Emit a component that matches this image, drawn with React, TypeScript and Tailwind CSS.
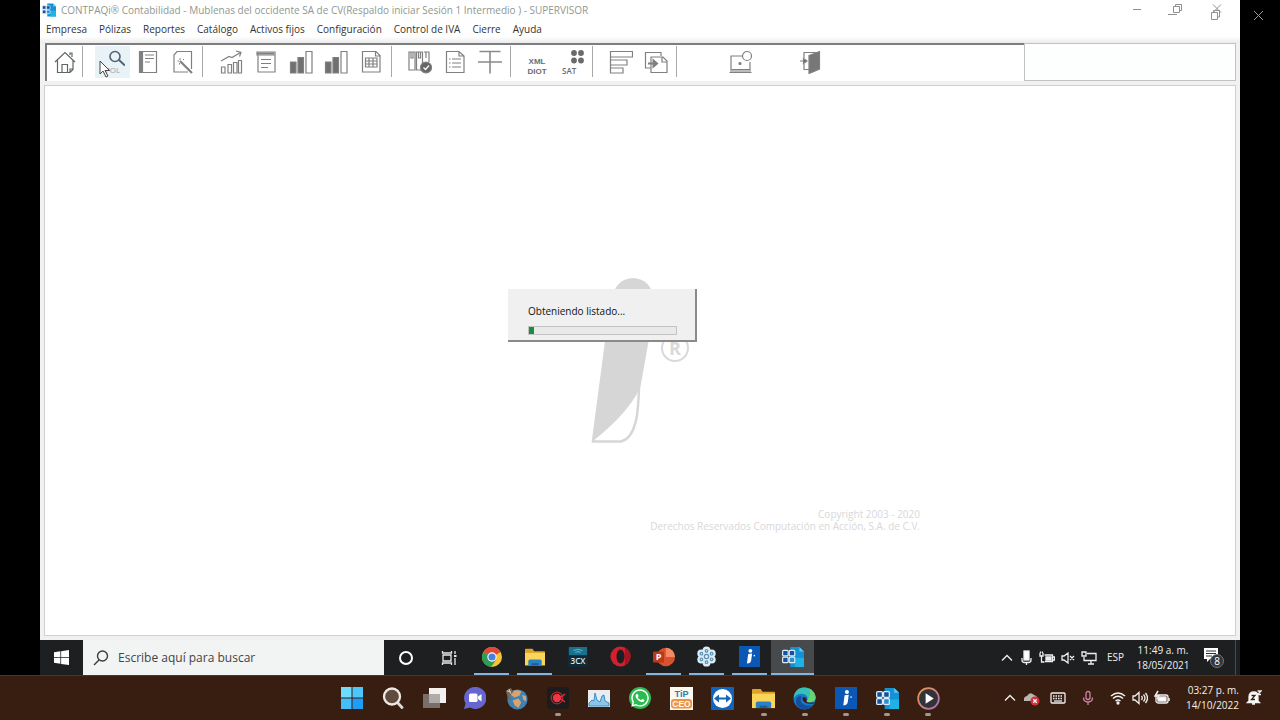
import type { ReactNode } from "react";
import { FaWhatsapp } from "react-icons/fa";

const menus = [
  "Empresa",
  "Pólizas",
  "Reportes",
  "Catálogo",
  "Activos fijos",
  "Configuración",
  "Control de IVA",
  "Cierre",
  "Ayuda",
];

/* ---------- toolbar drawings ---------- */

function Line({ children, color = "#808080" }: { children: ReactNode; color?: string }) {
  return (
    <svg viewBox="0 0 24 24" width="24" height="24" fill="none" stroke={color} strokeWidth="1.200">
      {children}
    </svg>
  );
}

const HomeIcon = () => (
  <Line color="#5f6668">
    <path d="M2 12 12 2.500 22 12M4.500 10.500V22.500H17L20 19.500V10.500M17 5V3h2v4M9 22.500V14.500h5.500v8M17 22v-3h3" />
  </Line>
);
const LookupIcon = () => (
  <svg viewBox="0 0 24 24" width="24" height="24" fill="none" stroke="#4f6274" strokeWidth="1.600">
    <circle cx="14" cy="6.500" r="5" />
    <path d="m18 10 6 5.500" strokeWidth="2" />
    <text x="4" y="23" fontSize="8" fill="#9aa2a6" stroke="none" fontFamily="Open Sans, sans-serif">
      POL
    </text>
  </svg>
);
const BookIcon = () => (
  <Line>
    <path d="M3.500 1.500h17v21h-17zM6.500 1.500v21" />
    <path d="M5 2v20" strokeWidth="2.200" />
    <path d="M9 5h9M9 8.500h9M9 12h5" strokeWidth="1" />
  </Line>
);
const WandIcon = () => (
  <Line>
    <path d="M20.500 19V1.500H6L3 5v17h14" />
    <path d="m9 11 12 12" strokeWidth="2.200" />
    <path d="M9 8v2M6.500 11H8M13 9l-1 1M8.500 14.500V13" strokeWidth="1" />
  </Line>
);
const TrendIcon = () => (
  <Line>
    <path d="M2.500 17h3.500v6H2.500zM9 14.500h3.500V23H9zM14.500 12.500H18V23h-3.500zM19.500 10.500H22.500V23h-3z" />
    <path d="m2 11 8-4.500 3 1 8.500-5M17 1l5 1.500-1.500 4" />
  </Line>
);
const LedgerIcon = () => (
  <Line>
    <path d="M4 5v17h17V5M3 2h18v3H3zM7 9.500h10M7 13.500h10M7 17.500h7" />
    <path d="M3 3.500h17" strokeWidth="2" />
  </Line>
);
const BarsIcon = () => (
  <Line>
    <path d="M1.500 12H7v11H1.500zM9 7.500h5.500V23H9z" fill="#707070" />
    <path d="M17 1.500h6V23h-6z" />
  </Line>
);
const SheetIcon = () => (
  <Line>
    <path d="M3.500 1.500H17L21 5.500v16.500H3.500zM16.500 1.500V6H21" />
    <path d="M6.500 8h11.500v9H6.500zM6.500 11h11.500M6.500 14h11.500M10 8v9M14 8v9" />
  </Line>
);
const BindersIcon = () => (
  <Line>
    <path d="M1 2h6v18H1zM8.500 2h6v18h-6zM16 2h5v10M3 2v6h2V2M10.500 2v6h2V2M18 2v6" />
    <circle cx="18" cy="17.500" r="5.500" fill="#666" />
    <path d="m15.500 17.500 2 2 3.500-4" stroke="#fff" />
  </Line>
);
const NoteIcon = () => (
  <Line>
    <path d="M3.500 1.500H16L21 6v16.500H3.500zM16 1.500V6h5M9 9h9M9 13h9M9 17h9M6 9h1.500M6 13h1.500M6 17h1.500" />
  </Line>
);
const AccountIcon = () => (
  <Line color="#8a8a8a">
    <path d="M1.500 1.500h21M0 12h24M12 1.500v22" strokeWidth="1.600" />
  </Line>
);
const XmlIcon = () => (
  <svg viewBox="0 0 24 24" width="24" height="24" fill="#6d6d6d" fontFamily="Liberation Sans, sans-serif" fontWeight="700">
    <text x="12" y="14" fontSize="8" textAnchor="middle">XML</text>
    <text x="12" y="23.500" fontSize="8" textAnchor="middle">DIOT</text>
  </svg>
);
const SatIcon = () => (
  <svg viewBox="0 0 24 24" width="24" height="24" fill="#6a6a6a">
    <circle cx="14" cy="3" r="2.900" />
    <circle cx="21" cy="3" r="2.900" />
    <circle cx="14" cy="10.500" r="2.900" />
    <circle cx="21" cy="10.500" r="2.900" />
    <text x="2" y="23.500" fontSize="8" fontFamily="Open Sans, sans-serif" fontWeight="600">SAT</text>
  </svg>
);
const RowsIcon = () => (
  <Line>
    <path d="M1.500 1.500h22v5.500h-22zM1.500 10h16.500v5H1.500zM1.500 18H14v5H1.500zM1.500 1v22" />
  </Line>
);
const CopyIcon = () => (
  <Line>
    <path d="M17 6V2.500H1.500V18H7M7 7h12l4 4v11.500H7zM18 7v5h5" />
    <path d="M4 13.500h7M9.500 10.500l3.500 3-3.500 3z" strokeWidth="2" fill="#666" />
  </Line>
);
const LaptopIcon = () => (
  <Line>
    <path d="M14 6H3v13.500h19V12M1.500 22.500h22" />
    <path d="M2 21h21" stroke="#bbb" strokeWidth="2" />
    <circle cx="19" cy="6" r="4.500" />
    <circle cx="12" cy="13.500" r="1" fill="#666" />
  </Line>
);
const ExitIcon = () => (
  <Line>
    <path d="M6 8V2.500h16M6 14v5.500h5" />
    <path d="M11 5.500 21.500 1.500V19L11 23.500z" fill="#777" />
    <path d="M2 11h4M5.500 8.500 9 11l-3.500 2.500z" fill="#666" />
  </Line>
);

function Tool({ label, children, hot = false }: { label: string; children: ReactNode; hot?: boolean }) {
  return (
    <button
      aria-label={label}
      className={`relative flex h-8 w-[35px] shrink-0 items-center justify-center ${hot ? "bg-[#e9f2f7]" : ""}`}
    >
      {children}
    </button>
  );
}

const Sep = () => <span className="h-[31px] w-px shrink-0 bg-[#a8a8a8]" />;

/* ---------- application marks ---------- */

const ContpaqMark = ({ size }: { size: number }) => (
  <svg viewBox="0 0 24 24" width={size} height={size}>
    <path d="M9 1h10l5 5v17H9z" fill="#1592d6" />
    <path d="M19 1v5h5z" fill="#5fc7f0" />
    <path d="M14 13h10v10H14z" fill="#1fb2e6" />
    <g stroke="#dceefa" strokeWidth="1.300">
      <rect x="0.700" y="4.700" width="6" height="6" rx="1" fill="#15519f" />
      <rect x="7.900" y="4.700" width="6" height="6" rx="1" fill="#15519f" />
      <rect x="0.700" y="12.200" width="6" height="6" rx="1" fill="#15519f" />
      <rect x="7.900" y="12.200" width="6" height="6" rx="1" fill="#2a8fd0" />
    </g>
  </svg>
);
const InfoMark = ({ size }: { size: number }) => (
  <svg viewBox="0 0 24 24" width={size} height={size}>
    <path d="M0 0h24v24H0z" fill="#0b57b4" />
    <circle cx="13" cy="5.500" r="2.200" fill="#fff" />
    <path d="M10.500 9 15 8.500l-1 7.500c-.5 3-2 4-5 4z" fill="#fff" />
    <circle cx="17.500" cy="11" r=".9" fill="#fff" />
  </svg>
);
const FolderMark = ({ size }: { size: number }) => (
  <svg viewBox="0 0 24 24" width={size} height={size}>
    <path d="M0 3q0-1 1-1h8l2 3h12q1 0 1 1v16H0z" fill="#dca326" />
    <path d="M0 7h24v15H0z" fill="#fbd55b" />
    <path d="M4 22v-5q0-2 2-2h12q2 0 2 2v5z" fill="#2781c4" />
    <path d="M8 22v-2.500h8V22z" fill="#185f9e" />
  </svg>
);
const ChromeMark = () => (
  <svg viewBox="0 0 24 24" width="20" height="20">
    <circle cx="12" cy="12" r="12" fill="#f5c633" />
    <path d="M12 12 1.600 6A12 12 0 0 1 22.400 6z" fill="#dc493b" />
    <path d="M1.600 6A12 12 0 0 0 11 24l6-9-5-3z" fill="#2f9c56" />
    <circle cx="12" cy="12" r="5.600" fill="#fff" />
    <circle cx="12" cy="12" r="4.300" fill="#4682e4" />
  </svg>
);
const ThreeCxMark = () => (
  <svg viewBox="0 0 22 22" width="20" height="20">
    <rect width="22" height="22" rx="2" fill="#102a38" />
    <path d="M1 0h20v9H1z" fill="#1c708b" />
    <path d="M6 4q5-3 10 0M8 6q3-2 6 0" stroke="#54c5df" fill="none" />
    <text x="11" y="19" fontSize="9" fontWeight="600" fill="#dfe7ea" textAnchor="middle" fontFamily="Open Sans, sans-serif">3CX</text>
  </svg>
);
const OperaMark = () => (
  <svg viewBox="0 0 24 24" width="21" height="21">
    <circle cx="12" cy="12" r="11.500" fill="#d61f2d" />
    <path d="M17 2q7 4 6.500 10T17 22z" fill="#a81222" />
    <ellipse cx="12" cy="12" rx="4.600" ry="8" fill="#1e1f22" />
  </svg>
);
const PowerPointMark = () => (
  <svg viewBox="0 0 24 24" width="22" height="22">
    <circle cx="14" cy="12" r="10" fill="#d7522f" />
    <path d="M14 2a10 10 0 0 1 10 10H14z" fill="#f28a68" />
    <rect y="6" width="12" height="12" rx="1" fill="#bd3719" />
    <text x="6" y="15.500" fontSize="10" fontWeight="700" fill="#fff" textAnchor="middle" fontFamily="Open Sans, sans-serif">P</text>
  </svg>
);
const FlowerMark = () => (
  <svg viewBox="0 0 24 24" width="21" height="21">
    <g fill="#dcecf5">
      <circle cx="12" cy="12" r="8" />
      <circle cx="12" cy="5" r="4.500" />
      <circle cx="12" cy="19" r="4.500" />
      <circle cx="6" cy="8.500" r="4.500" />
      <circle cx="18" cy="8.500" r="4.500" />
      <circle cx="6" cy="15.500" r="4.500" />
      <circle cx="18" cy="15.500" r="4.500" />
    </g>
    <g fill="none" stroke="#5b8fb3" strokeWidth="1.300">
      <circle cx="12" cy="12" r="2.500" />
      <circle cx="12" cy="5.500" r="1.500" />
      <circle cx="12" cy="18.500" r="1.500" />
      <circle cx="6.200" cy="8.800" r="1.500" />
      <circle cx="17.800" cy="8.800" r="1.500" />
      <circle cx="6.200" cy="15.200" r="1.500" />
      <circle cx="17.800" cy="15.200" r="1.500" />
    </g>
  </svg>
);

const guestApps: { label: string; icon: ReactNode; open?: boolean; active?: boolean }[] = [
  { label: "Chrome", icon: <ChromeMark />, open: true },
  { label: "Explorador", icon: <FolderMark size={20} />, open: true },
  { label: "3CX", icon: <ThreeCxMark /> },
  { label: "Opera", icon: <OperaMark /> },
  { label: "PowerPoint", icon: <PowerPointMark />, open: true },
  { label: "GoTo", icon: <FlowerMark />, open: true },
  { label: "CONTPAQi", icon: <InfoMark size={21} />, open: true },
  { label: "Contabilidad", icon: <ContpaqMark size={22} />, open: true, active: true },
];

const hostApps: { label: string; icon: ReactNode; open?: boolean }[] = [
  {
    label: "Inicio",
    icon: (
      <svg viewBox="0 0 22 22" width="22" height="22">
        <path d="M0 0h10.500v10.500H0z" fill="#6fdcff" />
        <path d="M11.500 0H22v10.500H11.500z" fill="#4cc6fc" />
        <path d="M0 11.500h10.500V22H0z" fill="#43bdfb" />
        <path d="M11.500 11.500H22V22H11.500z" fill="#1f9df5" />
      </svg>
    ),
  },
  {
    label: "Buscar",
    icon: (
      <svg viewBox="0 0 22 22" width="22" height="22">
        <path d="m15 15 5 5.500" stroke="#ded9d5" strokeWidth="2.800" strokeLinecap="round" />
        <circle cx="10" cy="9.500" r="8" fill="#604b3d" stroke="#eee9e5" strokeWidth="2.300" />
      </svg>
    ),
  },
  {
    label: "Vista de tareas",
    icon: (
      <svg viewBox="0 0 24 22" width="24" height="22">
        <path d="M7 1h17v15H7z" fill="#f3f1ef" />
        <path d="M1 7h17v14H1z" fill="#77706a" />
        <path d="M7 7h11v9H7z" fill="#b0aba7" />
      </svg>
    ),
  },
  {
    label: "Chat",
    icon: (
      <svg viewBox="0 0 22 22" width="22" height="22">
        <path d="M11 0a11 11 0 1 1-5 20.500L0 22l1.500-5.500A11 11 0 0 1 11 0z" fill="#6666cf" />
        <rect x="5" y="6.500" width="8.500" height="8.500" rx="1.500" fill="#fff" />
        <path d="m14 9.500 3.500-2.500v7.500L14 12z" fill="#fff" />
      </svg>
    ),
  },
  {
    label: "Navegador",
    icon: (
      <svg viewBox="0 0 24 24" width="23" height="23">
        <circle cx="13" cy="13" r="10.500" fill="#3f83b5" />
        <path d="M7 5q6-3 10 0l-2 4-5 2-4-3zM8 14l6-2 3 4-3 6-4-3zM18 8l4 2v5l-3-2z" fill="#dda16f" />
        <path d="m1 4 5-3 3 4-4 4 2 5-4-2z" fill="#74675c" />
        <path d="m2 4 4 1M4 2l2 5" stroke="#e3d2b8" />
      </svg>
    ),
  },
  {
    label: "Grabadora",
    open: true,
    icon: (
      <svg viewBox="0 0 22 22" width="22" height="22">
        <rect width="22" height="22" rx="4" fill="#1d1c1c" />
        <circle cx="10" cy="11" r="5.800" fill="none" stroke="#a92731" strokeWidth="1.300" />
        <circle cx="10" cy="11" r="4.200" fill="#f03640" />
        <path d="m14 10 4-3M14 12l4 3" stroke="#e62e3a" strokeWidth="1.400" />
      </svg>
    ),
  },
  {
    label: "Monitor",
    icon: (
      <svg viewBox="0 0 22 17" width="22" height="17">
        <path d="M0 0h22v17H0z" fill="#e7edf1" />
        <path d="M1 13 4 10l2 1 1-8 2 7 3 2 2-6 2-1 1 6 4 2v3H1z" fill="#8cc6e8" stroke="#3b90c4" />
      </svg>
    ),
  },
  {
    label: "WhatsApp",
    icon: (
      <span className="flex size-[22px] items-center justify-center rounded-full bg-[#2dbb52] text-white">
        <FaWhatsapp size={20} />
      </span>
    ),
  },
  {
    label: "TiP CEO",
    icon: (
      <svg viewBox="0 0 23 23" width="23" height="23" fontFamily="Liberation Sans, sans-serif" fontWeight="700">
        <path d="M0 0h23v23H0z" fill="#fbf8f2" />
        <text x="11.500" y="9.500" fontSize="9" fill="#287daf" textAnchor="middle">TiP</text>
        <rect x="1" y="12" width="21" height="9.500" rx="3" fill="#ec9440" />
        <text x="11.500" y="20" fontSize="8.500" fill="#fff8e8" textAnchor="middle">CEO</text>
      </svg>
    ),
  },
  {
    label: "TeamViewer",
    icon: (
      <svg viewBox="0 0 23 23" width="23" height="23">
        <rect width="23" height="23" rx="1" fill="#0f64bd" />
        <circle cx="11.500" cy="11.500" r="9.500" fill="#fff" />
        <path d="m3 11.500 5-4v3h7v-3l5 4-5 4v-3H8v3z" fill="#1265b8" />
      </svg>
    ),
  },
  { label: "Explorador de archivos", icon: <FolderMark size={23} />, open: true },
  {
    label: "Edge",
    open: true,
    icon: (
      <svg viewBox="0 0 24 24" width="23" height="23">
        <circle cx="12" cy="12" r="11.500" fill="#1878c9" />
        <path d="M1 9C3 2 8 0 13 .5c7 .5 11 6 10.500 11C23 16 17 17 14 15c3-4 0-8-5-8-4 0-7 2-8 5z" fill="#35c1b5" />
        <path d="M17 2c5 3 7 7 6.500 10-1 4-6 5-9.500 3 3-3 5-8 3-13z" fill="#69d470" />
        <path d="M9 10c-3 5 1 11 12 9-5 7-17 5-18-4 0-4 3-6 6-5z" fill="#124f9e" />
        <path d="M10 11c-1 4 4 8 12 6 2-2-5 1-8-2 1-2 0-5-4-4z" fill="#3b1d0f" />
      </svg>
    ),
  },
  { label: "CONTPAQi", icon: <InfoMark size={22} />, open: true },
  { label: "Contabilidad", icon: <ContpaqMark size={23} />, open: true },
  {
    label: "Reproductor",
    open: true,
    icon: (
      <svg viewBox="0 0 24 24" width="23" height="23">
        <defs>
          <linearGradient id="ring" x1="0" y1="0" x2="1" y2="1">
            <stop offset="0" stopColor="#f29a44" />
            <stop offset="1" stopColor="#a06fc9" />
          </linearGradient>
        </defs>
        <circle cx="12" cy="12" r="10.800" fill="#333238" stroke="url(#ring)" strokeWidth="1.800" />
        <path d="m9 6.500 8.500 5.500L9 17.500z" fill="#fff" />
      </svg>
    ),
  },
];

/* ---------- tray drawings ---------- */

function Tray({ children, w = 16, color = "#f0f0f0" }: { children: ReactNode; w?: number; color?: string }) {
  return (
    <svg viewBox={`0 0 ${w} 16`} width={w} height="16" fill="none" stroke={color} strokeWidth="1.300" className="shrink-0">
      {children}
    </svg>
  );
}

const Chevron = () => (
  <Tray w={12}>
    <path d="m1 10.500 5-5 5 5" />
  </Tray>
);

function TitleBar() {
  return (
    <header className="flex h-5 items-center pl-[2px]">
      <span className="flex w-[19px] shrink-0">
        <ContpaqMark size={14} />
      </span>
      <h1 className="min-w-0 flex-1 truncate text-[10px] leading-5 text-[#8f9890]">
        CONTPAQi® Contabilidad - Mublenas del occidente SA de CV(Respaldo iniciar Sesión 1 Intermedio ) - SUPERVISOR
      </h1>
      <div className="mr-[3px] flex h-5 text-[#8f8f8f]">
        <button aria-label="Minimizar" className="flex w-10 justify-center">
          <svg width="24" height="20" fill="none" stroke="currentColor">
            <path d="M8 9.500h8" />
          </svg>
        </button>
        <button aria-label="Restaurar" className="flex w-10 justify-center">
          <svg width="24" height="20" fill="none" stroke="currentColor">
            <path d="M8.500 6.500h6v6h-6zM10.500 6v-1.500h6v6H15M3 14.500h9" />
          </svg>
        </button>
        <button aria-label="Cerrar" className="flex w-10 justify-center">
          <svg width="24" height="20" fill="none" stroke="currentColor">
            <path d="m8 4.500 8 8M16 4.500l-8 8M6.500 12.500h6v7h-6zM8.500 12v-1.500h6V17H13" />
          </svg>
        </button>
      </div>
    </header>
  );
}

function Toolbar() {
  return (
    <div className="flex h-[38px] pl-[5px] pr-1">
      <div className="flex min-w-0 flex-1 items-start border-l-2 border-t-2 border-[#7d7d7d] bg-white pt-px">
        <Tool label="Inicio"><HomeIcon /></Tool>
        <Sep />
        <div className="ml-3 mr-[2px] flex">
          <Tool label="Pólizas" hot>
            <LookupIcon />
            <svg viewBox="0 0 12 18" width="12" height="18" className="absolute left-1 top-[14px]">
              <path d="M1 1v13l3-3 3 6 2-1-3-5.500h4.500z" fill="#fff" stroke="#444" />
            </svg>
          </Tool>
          <Tool label="Libro"><BookIcon /></Tool>
          <Tool label="Asistente"><WandIcon /></Tool>
        </div>
        <Sep />
        <div className="ml-[10px] mr-[3px] flex">
          <Tool label="Tendencia"><TrendIcon /></Tool>
          <Tool label="Auxiliares"><LedgerIcon /></Tool>
          <Tool label="Balance"><BarsIcon /></Tool>
          <Tool label="Resultados"><BarsIcon /></Tool>
          <Tool label="Hoja"><SheetIcon /></Tool>
        </div>
        <Sep />
        <div className="ml-[10px] mr-[3px] flex">
          <Tool label="Ejercicios"><BindersIcon /></Tool>
          <Tool label="Documento"><NoteIcon /></Tool>
          <Tool label="Cuentas"><AccountIcon /></Tool>
        </div>
        <Sep />
        <div className="ml-2 mr-[3px] flex">
          <Tool label="XML DIOT"><XmlIcon /></Tool>
          <Tool label="SAT"><SatIcon /></Tool>
        </div>
        <Sep />
        <div className="ml-[10px] mr-[3px] flex">
          <Tool label="Niveles"><RowsIcon /></Tool>
          <Tool label="Exportar"><CopyIcon /></Tool>
        </div>
        <Sep />
        <div className="ml-[45px] flex gap-[35px]">
          <Tool label="Equipo"><LaptopIcon /></Tool>
          <Tool label="Salir"><ExitIcon /></Tool>
        </div>
      </div>
      <div className="w-[212px] shrink-0 border border-[#c2c2c2] bg-[#fdfefe]" />
    </div>
  );
}

function Workspace() {
  return (
    <main className="m-1 flex flex-1 justify-center border border-[#cfcfcf] bg-white pt-[190px]">
      <section className="relative flex w-[560px] flex-col items-center">
        <svg viewBox="0 0 110 172" width="110" height="172">
          <circle cx="48" cy="22" r="20" fill="#d6d6d6" />
          <path d="M21 67H62L54 114Q42 138 8 165z" fill="#d6d6d6" />
          <path d="M21 67H62L54 112Q53 140 50 148 46 163 36 165.500H8z" fill="none" stroke="#d6d6d6" strokeWidth="2.500" />
          <circle cx="90" cy="72" r="13" fill="none" stroke="#d9d9d9" strokeWidth="2" />
          <text x="90" y="79" fontSize="18" fontWeight="700" fill="#d9d9d9" textAnchor="middle" fontFamily="Open Sans, sans-serif">R</text>
        </svg>
        <p className="mt-[60px] self-end text-right text-[10px] leading-3 text-[#d8d8d8]">
          Copyright 2003 - 2020
          <br />
          Derechos Reservados Computación en Acción, S.A. de C.V.
        </p>
        <div
          role="dialog"
          aria-label="Progreso"
          className="absolute left-[148px] top-[13px] h-[53px] w-[189px] border-b-2 border-r-2 border-[#8a8a8a] bg-[#f0f0f0] pl-5 pr-[18px] pt-[14px]"
        >
          <p className="text-[10px] leading-4 text-[#111]">Obteniendo listado...</p>
          <div className="mt-[7px] h-[9px] border border-[#c3c3c3] bg-[#e9e9e9]">
            <div className="h-full w-[5px] bg-[#198c46]" />
          </div>
        </div>
      </section>
    </main>
  );
}

function GuestTaskbar() {
  return (
    <footer className="flex h-[35px] bg-[#1e1f21] text-[#f0f0f0]">
      <button aria-label="Inicio" className="flex w-[43px] items-center justify-center">
        <svg viewBox="0 0 16 16" width="15" height="15" fill="#fff">
          <path d="m0 2.300 6.800-1v6.200H0zM7.600 1.200 16 0v7.500H7.600zM0 8.300h6.800v6.300L0 13.600zM7.600 8.300H16V16l-8.400-1.200z" />
        </svg>
      </button>
      <label className="flex w-[301px] items-center gap-[9px] bg-[#f2f3f3] pl-[10px]">
        <svg viewBox="0 0 16 16" width="16" height="16" fill="none" stroke="#3c3c3c" strokeWidth="1.400">
          <circle cx="9.500" cy="6" r="5" />
          <path d="m6 10-5 5" />
        </svg>
        <input
          aria-label="Buscar"
          placeholder="Escribe aquí para buscar"
          className="min-w-0 flex-1 bg-transparent text-[12px] text-[#444] outline-none placeholder:text-[#444]"
        />
      </label>
      <button aria-label="Cortana" className="flex w-[43px] items-center justify-center">
        <svg width="16" height="16" fill="none" stroke="#fff" strokeWidth="2">
          <circle cx="8" cy="8" r="6" />
        </svg>
      </button>
      <button aria-label="Vista de tareas" className="flex w-[43px] items-center justify-center">
        <svg width="16" height="16" fill="none" stroke="#e8e8e8" strokeWidth="1.300">
          <path d="M2 5h8v6H2zM1.500 1v2h9V1M1.500 15v-2h9v2M14 1v3M14 8v7" />
          <path d="M13 6h2.500" strokeWidth="2" />
        </svg>
      </button>
      <nav className="flex">
        {guestApps.map((a) => (
          <button
            key={a.label}
            aria-label={a.label}
            className={`flex w-[43px] flex-col items-center ${a.active ? "bg-[#47494b]" : ""}`}
          >
            <span className="flex flex-1 items-center">{a.icon}</span>
            <span className={`h-[2px] ${a.active ? "w-full" : "w-[35px]"} ${a.open ? "bg-[#84b4e0]" : ""}`} />
          </button>
        ))}
      </nav>
      <div className="ml-auto flex items-center">
        <div className="flex items-center gap-[6px]">
          <Chevron />
          <Tray w={14}>
            <rect x="5" y="1" width="5" height="9" fill="#fff" />
            <path d="M3 8v2q0 2.500 2.500 2.500h4Q12 12.500 12 10V8M7.500 12v3" />
          </Tray>
          <Tray>
            <path d="M5.500 5h8v6.500H6M14 7h1.500v3H14" />
            <path d="M7 7h5v3H7z" fill="#eee" />
            <path d="M1 3v3h3V3M2.500 6v6h3M1.500 1.500V3M3.500 1.500V3" />
          </Tray>
          <Tray w={14}>
            <path d="M1 6h2l4-3v10l-4-3H1zM9 6l4 4M13 6l-4 4" />
          </Tray>
          <Tray>
            <path d="M6 3.500h9v7H3V7M7 14h6M10 10.500V14M1 2h4v4H1z" />
          </Tray>
        </div>
        <span className="ml-[10px] text-[10px]">ESP</span>
        <time className="ml-2 w-[62px] text-center text-[10px] leading-[15px]">
          11:49 a. m.
          <br />
          18/05/2021
        </time>
        <button aria-label="Notificaciones" className="ml-2 mr-[9px] flex">
          <svg viewBox="0 0 24 24" width="24" height="24">
            <path d="M2 2h14v11H8l-3 3v-3H2z" fill="#fff" />
            <path d="M4 5h10M4 7.500h10M4 10h6" stroke="#333" />
            <circle cx="15" cy="15" r="6.500" fill="#34363a" stroke="#777" />
            <text x="15" y="19" fontSize="10" fill="#fff" textAnchor="middle" fontFamily="Open Sans, sans-serif">8</text>
          </svg>
        </button>
        <span className="mr-1 h-[35px] w-px bg-[#4b4b4b]" />
      </div>
    </footer>
  );
}

function HostTaskbar() {
  return (
    <footer className="grid h-[45px] grid-cols-[1fr_618px_1fr] border-t border-[#4d3424] bg-[#381e11] text-[#f5efea]">
      <span />
      <nav className="grid grid-cols-15">
        {hostApps.map((a) => (
          <button key={a.label} aria-label={a.label} className="flex flex-col items-center pt-[10px]">
            <span className="flex h-6 items-center">{a.icon}</span>
            <span className={`mt-[3px] h-[3px] w-[6px] rounded-full ${a.open ? "bg-[#a5978e]" : ""}`} />
          </button>
        ))}
      </nav>
      <div className="flex items-center justify-end pr-[18px]">
        <Chevron />
        <span className="ml-2 flex">
          <Tray>
            <path d="M0 11q-1-4 3-5 3-5 7-1 4 1 4 6z" fill="#bcb5b0" stroke="none" />
            <circle cx="11" cy="11" r="4.500" fill="#d3303a" stroke="none" />
            <path d="m9.300 9.300 3.400 3.400M12.700 9.300l-3.400 3.400" stroke="#fff" />
          </Tray>
        </span>
        <span className="ml-[10px] flex">
          <Tray>
            <rect x="1" y="3" width="14" height="10" rx="1" />
            <path d="M3 6h10M3 8.500h10" strokeDasharray="1.500 1" />
            <path d="M4 11h8" />
          </Tray>
        </span>
        <span className="ml-[14px] flex">
          <Tray color="#cf83a8">
            <rect x="6" y="1.500" width="4" height="8" rx="2" />
            <path d="M3.500 7.500q0 4.500 4.500 4.500t4.500-4.500M8 12v3" />
          </Tray>
        </span>
        <span className="ml-[14px] flex gap-[6px]">
          <Tray>
            <path d="M1 6q7-6 14 0M3 8.500q5-4.500 10 0M5.500 11q2.500-2 5 0" strokeWidth="1.500" />
            <circle cx="8" cy="13" r="1" fill="#fff" />
          </Tray>
          <Tray>
            <path d="M1 6h2l4-3.500v11L3 10H1zM9.500 6q1.500 2 0 4M11.500 4.500q3 3.500 0 7M13.500 3q4 5 0 10" />
          </Tray>
          <Tray>
            <rect x="2" y="5" width="12" height="8" rx="2" />
            <path d="M6 7h6v4H4V9z" fill="#fff" />
            <path d="M15 8v3M4 1 1 6h4L3 9" strokeWidth="1.500" />
          </Tray>
        </span>
        <time className="ml-4 text-right text-[10px] leading-[15px]">
          03:27 p. m.
          <br />
          14/10/2022
        </time>
        <span className="ml-[7px] flex">
          <Tray>
            <path d="M3 11V7q0-5 5-5 4 0 4 5v4l1.500 1.500h-12zM6 14h3" fill="#fff" />
            <path d="M5.500 5.500H9l-3.500 4H9" stroke="#381e11" />
            <path d="M11.500 1H15l-3.500 3.500H15" />
          </Tray>
        </span>
      </div>
    </footer>
  );
}

export default function App() {
  return (
    <div className="flex min-h-screen flex-col bg-black font-['Open_Sans',sans-serif]">
      <div className="flex flex-1">
        <div className="w-10 shrink-0" />
        <div className="flex min-w-0 flex-1 flex-col">
          <div className="flex flex-1 flex-col bg-[#f1f1f1]">
            <div className="bg-linear-to-b from-white from-85% to-[#ebebeb] pb-[5px]">
              <TitleBar />
              <nav className="flex h-[18px] items-center gap-3 pl-[6px]">
                {menus.map((m) => (
                  <button key={m} className="whitespace-nowrap text-[10px] leading-4 text-[#333]">
                    {m}
                  </button>
                ))}
              </nav>
            </div>
            <Toolbar />
            <Workspace />
          </div>
          <GuestTaskbar />
        </div>
        <div className="w-10 shrink-0 pl-3 pt-[9px]">
          <button aria-label="Cerrar vista" className="flex">
            <svg width="13" height="13" stroke="#999" fill="none">
              <path d="m2 2 9 9M11 2l-9 9" />
            </svg>
          </button>
        </div>
      </div>
      <HostTaskbar />
    </div>
  );
}
